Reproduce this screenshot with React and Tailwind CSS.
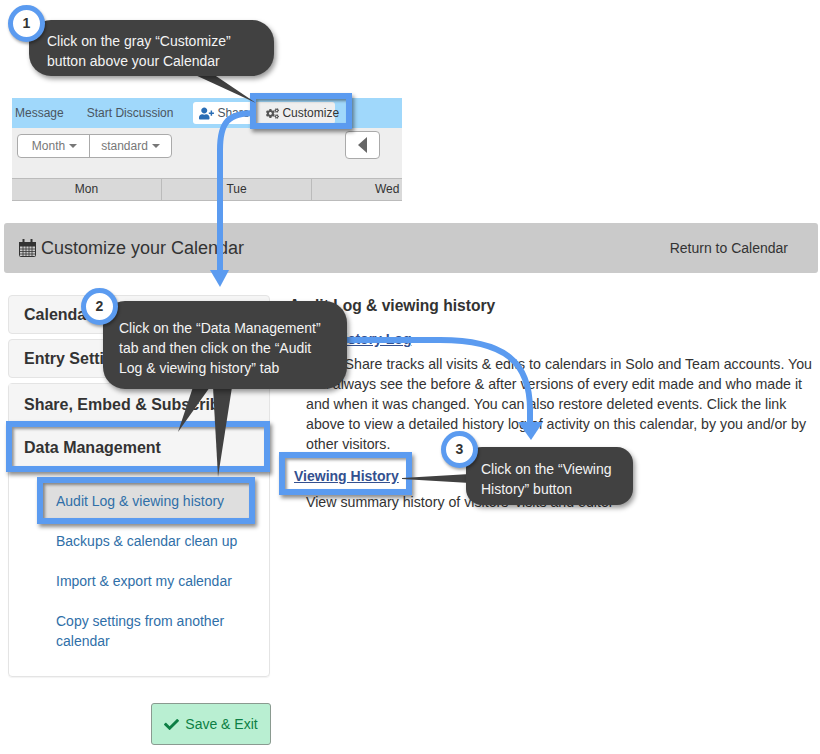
import React from 'react';
import { FaCheck, FaCogs, FaUserPlus } from 'react-icons/fa';

const Accordion = ({ label, className = '' }) => (
  <div className={`h-[39px] flex items-center px-[15px] bg-[#f5f5f5] border border-[#e4e4e4] rounded-[4px] text-[16px] font-bold text-[#333] ${className}`}>
    {label}
  </div>
);

const SubLink = ({ children, className = '' }) => (
  <div className={`px-[15px] py-[10px] text-[14px] leading-[20px] text-[#2f6fa8] ${className}`}>{children}</div>
);

const Callout = ({ className, children }) => (
  <div className={`absolute bg-[#414141] text-[#f4f4f4] text-[14px] leading-[20px] shadow-[2px_3px_5px_rgba(0,0,0,0.4)] ${className}`}>
    {children}
  </div>
);

const Badge = ({ n, className }) => (
  <div className={`absolute w-[37px] h-[37px] rounded-full bg-white border-[5px] border-[#5b9bf0] flex items-center justify-center text-[14px] font-bold text-[#333] shadow-[1px_2px_3px_rgba(0,0,0,0.35)] ${className}`}>
    {n}
  </div>
);

const Highlight = ({ className }) => (
  <div className={`absolute border-[6px] border-[#5b9bf0] shadow-[2px_3px_4px_rgba(0,0,0,0.45),inset_2px_2px_3px_rgba(0,0,0,0.4)] ${className}`} />
);

const CalendarIcon = () => (
  <svg width="17" height="18" viewBox="0 0 17 18" fill="none" stroke="#333">
    <rect x="0.5" y="3.5" width="16" height="14" rx="1" />
    <rect x="0.5" y="3.5" width="16" height="3.5" fill="#333" />
    <path d="M4 7v10M7 7v10M10 7v10M13 7v10M1 10h15M1 12.5h15M1 15h15" strokeWidth="0.8" />
    <path d="M4.5 0.5v4M12.5 0.5v4" strokeWidth="2" strokeLinecap="round" />
  </svg>
);

export default function App() {
  return (
    <div className="relative w-[820px] h-[754px] overflow-hidden bg-white text-[#333] font-['Liberation_Sans',Arial,sans-serif]">
      {/* Calendar crop */}
      <div className="pt-[98px] pl-[12px]">
        <div className="w-[390px] h-[103px] overflow-hidden">
          <div className="h-[30px] bg-[#a0d8fb] flex items-center text-[12px] text-[#4a5560]">
            <span className="ml-[3px]">Message</span>
            <span className="ml-[23px]">Start Discussion</span>
            <div className="ml-[20px] h-[22px] w-[60px] pl-[6px] bg-white rounded-[3px] flex items-center gap-[3px]">
              <FaUserPlus size={15} className="text-[#2a6db5] shrink-0" />
              <span>Share</span>
            </div>
            <div className="h-[22px] w-[81px] ml-[1px] pl-[12px] bg-[#efefef] rounded-[3px] flex items-center gap-[3px] text-[#333]">
              <FaCogs size={13} className="text-[#555] shrink-0" />
              <span>Customize</span>
            </div>
          </div>
          <div className="h-[50px] bg-[#eeeeee] pt-[6px] pl-[5px] flex items-start">
            <div className="h-[24px] flex bg-white border border-[#aaa] rounded-[4px] text-[12px] text-[#777]">
              <div className="w-[72px] pl-[2px] flex items-center justify-center gap-[4px] border-r border-[#aaa]">
                Month <span className="w-0 h-0 border-x-[4px] border-x-transparent border-t-[4px] border-t-[#777]" />
              </div>
              <div className="w-[81px] flex items-center justify-center gap-[4px]">
                standard <span className="w-0 h-0 border-x-[4px] border-x-transparent border-t-[4px] border-t-[#777]" />
              </div>
            </div>
            <div className="ml-[173px] -mt-[3px] w-[35px] h-[28px] bg-white border border-[#aaa] rounded-[4px] flex items-center justify-center">
              <span className="w-0 h-0 border-y-[8px] border-y-transparent border-r-[9px] border-r-[#666]" />
            </div>
          </div>
          <div className="h-[23px] bg-[#d9d9d9] border-y border-[#bbb] flex text-[12px] leading-[21px] text-[#333]">
            <div className="w-[150px] text-center border-r border-[#bbb]">Mon</div>
            <div className="w-[150px] text-center border-r border-[#bbb]">Tue</div>
            <div className="w-[90px] pl-[63px] whitespace-nowrap">Wed</div>
          </div>
        </div>
      </div>

      {/* Page header */}
      <div className="mt-[22px] ml-[4px] w-[814px] h-[50px] bg-[#cacaca] rounded-[3px] flex items-center justify-between pl-[15px] pr-[30px]">
        <div className="flex items-center gap-[5px] text-[18px] text-[#333]">
          <CalendarIcon />
          <span>Customize your Calendar</span>
        </div>
        <span className="text-[14px] text-[#333]">Return to Calendar</span>
      </div>

      <div className="mt-[22px] flex">
        {/* Left menu */}
        <div className="ml-[8px] w-[262px] shrink-0">
          <Accordion label="Calendar Settings" />
          <Accordion label="Entry Settings" className="mt-[5px]" />
          <div className="mt-[5px] h-[294px] border border-[#e4e4e4] rounded-[4px] shadow-[0_1px_1px_rgba(0,0,0,0.05)]">
            <div className="h-[42px] flex items-center px-[15px] bg-[#f5f5f5] text-[16px] font-bold">Share, Embed &amp; Subscribe</div>
            <div className="h-[43px] flex items-center px-[15px] bg-[#f5f5f5] text-[16px] font-bold">Data Management</div>
            <div className="ml-[32px] mt-[12px] mr-[15px]">
              <SubLink className="bg-[#dedede]">Audit Log &amp; viewing history</SubLink>
              <SubLink>Backups &amp; calendar clean up</SubLink>
              <SubLink>Import &amp; export my calendar</SubLink>
              <SubLink>Copy settings from another calendar</SubLink>
            </div>
          </div>
          <div className="mt-[26px] ml-[143px] w-[120px] h-[42px] bg-[#b9efd2] border border-[#8a9a90] rounded-[3px] flex items-center justify-center gap-[6px] text-[14px] text-[#0d7f45]">
            <FaCheck size={15} />
            <span>Save &amp; Exit</span>
          </div>
        </div>

        {/* Right content */}
        <div className="ml-[19px] w-[531px] text-[14.2px] leading-[20px]">
          <h3 className="mt-[1px] text-[15.6px] leading-[20px] font-bold">Audit Log &amp; viewing history</h3>
          <div className="mt-[13px] ml-[5px] text-[14px] font-bold text-[#33508f] underline">Audit History Log</div>
          <p className="mt-[5px] ml-[17px]">
            <span className="tracking-[-0.8px]">Keep&amp;</span>Share tracks all visits &amp; edits to calendars in Solo and Team accounts. You can always see the before &amp; after versions of every edit made and who made it and when it was changed. You can also restore deleted events. Click the link above to view a detailed history log of activity on this calendar, by you and/or by other visitors.
          </p>
          <div className="mt-[9px] ml-[5px] h-[26px] leading-[26px] text-[14px] font-bold text-[#33508f] underline">Viewing History</div>
          <p className="mt-[3px] ml-[17px]">View summary history of visitors' visits and editor</p>
        </div>
      </div>

      {/* Annotation overlay */}
      <Highlight className="left-[250px] top-[93px] w-[102px] h-[36px]" />
      <Highlight className="left-[6px] top-[421px] w-[264px] h-[51px]" />
      <Highlight className="left-[37px] top-[477px] w-[218px] h-[47px]" />
      <Highlight className="left-[279px] top-[452px] w-[133px] h-[43px]" />

      <svg className="absolute left-0 top-0" width="820" height="754" fill="none">
        <path d="M193 74 L256 103 L213 74 Z" fill="#414141" />
        <path d="M193 387 L178 432 L210 387 Z" fill="#414141" />
        <path d="M213 387 L218 477 L232 387 Z" fill="#414141" />
        <path d="M402 478 L470 474 L470 483 L402 479 Z" fill="#414141" />
        <path d="M255 113 C228 113 220 122 220 150 L220 271" stroke="#5b9bf0" strokeWidth="6" />
        <path d="M210 270 L229 270 L220 287 Z" fill="#5b9bf0" />
        <path d="M340 340 L440 340 C505 340 530 362 530 410 L530 424" stroke="#5b9bf0" strokeWidth="6" />
        <path d="M518 422 L543 422 L531 440 Z" fill="#5b9bf0" />
      </svg>

      <Callout className="left-[29px] top-[20px] w-[245px] h-[56px] rounded-[22px] pl-[18px] pt-[11px]">
        Click on the gray “Customize”<br />button above your Calendar
      </Callout>
      <Callout className="left-[103px] top-[301px] w-[244px] h-[88px] rounded-[22px] pl-[16px] pt-[17px]">
        Click on the “Data Management”<br />tab and then click on the “Audit<br />Log &amp; viewing history” tab
      </Callout>
      <Callout className="left-[466px] top-[447px] w-[167px] h-[58px] rounded-[16px] pl-[15px] pt-[12px]">
        Click on the “Viewing<br />History” button
      </Callout>
      <Badge n="1" className="left-[8px] top-[5px]" />
      <Badge n="2" className="left-[81px] top-[288px]" />
      <Badge n="3" className="left-[441px] top-[431px]" />
    </div>
  );
}
